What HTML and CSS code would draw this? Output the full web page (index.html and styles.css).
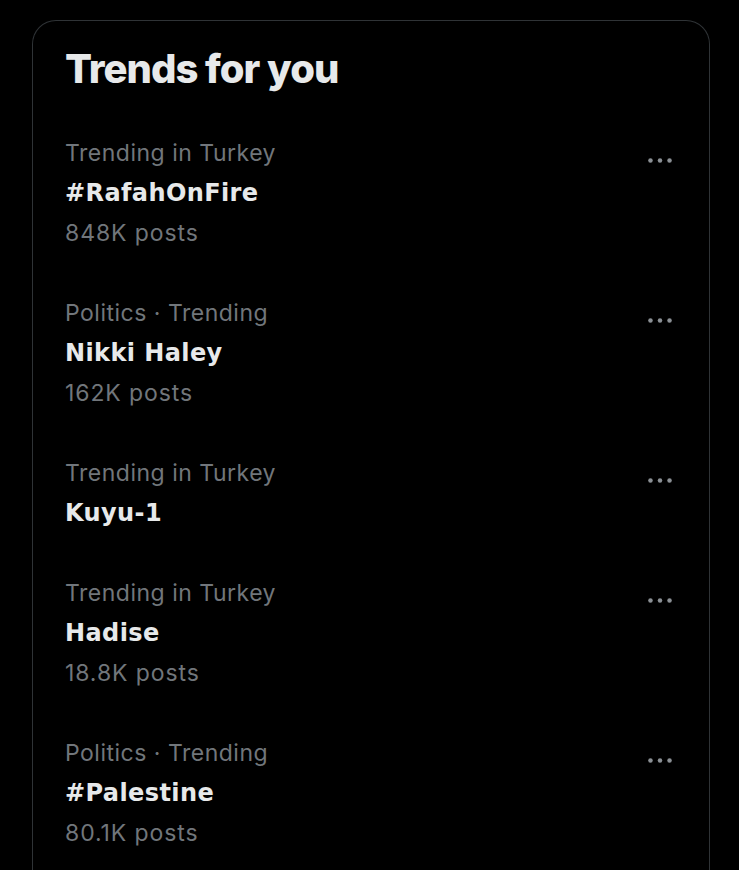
FILE: index.html
```html
<!DOCTYPE html>
<html lang="en">
<head>
    <meta charset="UTF-8">
    <meta name="viewport" content="width=device-width, initial-scale=1.0">
    <title>Trends for you</title>
    <link rel="stylesheet" href="styles.css">
</head>
<body>
    <div class="panel">
        <h2 class="titulo">Trends for you</h2>

        <div class="trend">
            <div class="info">
                <div class="categoria">Trending in Turkey</div>
                <div class="nombre">#RafahOnFire</div>
                <div class="cantidad">848K posts</div>
            </div>
            <button class="mas" aria-label="More">
                <svg viewBox="0 0 30 10"><circle cx="4" cy="5" r="2.6"/><circle cx="15" cy="5" r="2.6"/><circle cx="26" cy="5" r="2.6"/></svg>
            </button>
        </div>

        <div class="trend">
            <div class="info">
                <div class="categoria">Politics · Trending</div>
                <div class="nombre">Nikki Haley</div>
                <div class="cantidad">162K posts</div>
            </div>
            <button class="mas" aria-label="More">
                <svg viewBox="0 0 30 10"><circle cx="4" cy="5" r="2.6"/><circle cx="15" cy="5" r="2.6"/><circle cx="26" cy="5" r="2.6"/></svg>
            </button>
        </div>

        <div class="trend">
            <div class="info">
                <div class="categoria">Trending in Turkey</div>
                <div class="nombre">Kuyu-1</div>
            </div>
            <button class="mas" aria-label="More">
                <svg viewBox="0 0 30 10"><circle cx="4" cy="5" r="2.6"/><circle cx="15" cy="5" r="2.6"/><circle cx="26" cy="5" r="2.6"/></svg>
            </button>
        </div>

        <div class="trend">
            <div class="info">
                <div class="categoria">Trending in Turkey</div>
                <div class="nombre">Hadise</div>
                <div class="cantidad">18.8K posts</div>
            </div>
            <button class="mas" aria-label="More">
                <svg viewBox="0 0 30 10"><circle cx="4" cy="5" r="2.6"/><circle cx="15" cy="5" r="2.6"/><circle cx="26" cy="5" r="2.6"/></svg>
            </button>
        </div>

        <div class="trend">
            <div class="info">
                <div class="categoria">Politics · Trending</div>
                <div class="nombre">#Palestine</div>
                <div class="cantidad">80.1K posts</div>
            </div>
            <button class="mas" aria-label="More">
                <svg viewBox="0 0 30 10"><circle cx="4" cy="5" r="2.6"/><circle cx="15" cy="5" r="2.6"/><circle cx="26" cy="5" r="2.6"/></svg>
            </button>
        </div>
    </div>
</body>
</html>
```

FILE: styles.css
```css
body {
    background-color: #000;
    font-family: Inter, "Liberation Sans", sans-serif;
    margin: 0;
    height: 870px;
    overflow: hidden;
}
.panel {
    margin: 20px 0 0 32px;
    width: 676px;
    height: 900px;
    border: 1px solid #2f3336;
    border-bottom: none;
    border-radius: 24px 24px 0 0;
}
.titulo {
    margin: 0;
    height: 92px;
    padding: 24px 0 0 32px;
    box-sizing: border-box;
    color: #e7e9ea;
    font-size: 40px;
    line-height: 48px;
    font-weight: 800;
    letter-spacing: -1px;
}
.trend {
    display: flex;
    justify-content: space-between;
    align-items: flex-start;
    padding: 20px 36px 20px 32px;
}
.info {
    display: flex;
    flex-direction: column;
}
.categoria,
.cantidad {
    color: #71767b;
    font-size: 23px;
    line-height: 40px;
    letter-spacing: 0.5px;
}
.cantidad {
    letter-spacing: 0.9px;
}
.nombre {
    color: #e7e9ea;
    font-family: "DejaVu Sans", Inter, sans-serif;
    font-size: 24px;
    line-height: 40px;
    font-weight: 700;
    letter-spacing: 0.4px;
}
.mas {
    background: none;
    border: none;
    padding: 0;
    margin-top: 23px;
    width: 26px;
    height: 9px;
    display: flex;
}
.mas svg {
    width: 26px;
    height: 9px;
    fill: #8b9095;
}
```
